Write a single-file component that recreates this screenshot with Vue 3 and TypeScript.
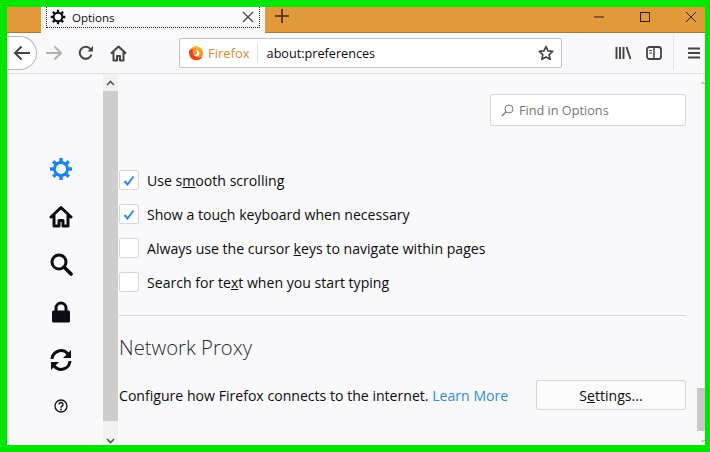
<template>
  <div class="frame">
    <div class="tabbar">
      <div class="tab">
        <div class="tab-inner">
          <svg class="tab-gear" width="16" height="16" viewBox="0 0 24 24"><use href="#gear" /></svg>
          <span class="tab-title">Options</span>
          <svg class="tab-close" width="12" height="12" viewBox="0 0 12 12"><path d="M1 1l10 10M11 1L1 11" stroke="#444" stroke-width="1.4" fill="none" /></svg>
        </div>
      </div>
      <svg class="new-tab" width="14" height="14" viewBox="0 0 14 14"><path d="M7 0v14M0 7h14" stroke="#3a2a12" stroke-width="1.6" /></svg>
      <div class="win-controls">
        <svg width="12" height="12" viewBox="0 0 12 12"><path d="M1 6h10" stroke="#222" stroke-width="1" /></svg>
        <svg width="12" height="12" viewBox="0 0 12 12"><rect x="1.5" y="1.5" width="9" height="9" fill="none" stroke="#222" /></svg>
        <svg width="12" height="12" viewBox="0 0 12 12"><path d="M1 1l10 10M11 1L1 11" stroke="#222" stroke-width="1" fill="none" /></svg>
      </div>
    </div>

    <div class="toolbar">
      <button class="back">
        <svg width="17" height="16" viewBox="0 0 17 16"><path d="M17 8H2M8.500 1.500L2 8l6.500 6.500" stroke="#444" stroke-width="2" fill="none" /></svg>
      </button>
      <svg class="nav-icon" width="17" height="16" viewBox="0 0 17 16"><path d="M0 8h15M8.500 1.500L15 8l-6.500 6.500" stroke="#b0b0b0" stroke-width="2" fill="none" /></svg>
      <svg class="nav-icon" width="16" height="16" viewBox="0 0 16 16"><path d="M13.500 9.500A6 6 0 1 1 11.600 3.200L14 5" stroke="#444" stroke-width="2" fill="none" /><path d="M15 1v5.500H9.500z" fill="#444" /></svg>
      <svg class="nav-icon" width="17" height="17" viewBox="0 0 17 17"><path d="M1 8.500L8.500 1.500 16 8.500M3.500 7v8.500h3.500v-4.500h3v4.500h3.500V7" stroke="#444" stroke-width="2" fill="none" stroke-linejoin="round" /></svg>
      <div class="urlbar">
        <svg class="fx-logo" width="16" height="16" viewBox="0 0 16 16">
          <circle cx="8" cy="8.500" r="7" fill="#f59a23" />
          <path d="M1 6c0 5 3 9 7.500 9 3 0 5-1.500 6-3.500-2 1.500-5 1.500-7 0C5 10 4 7 5 4.500 3 4 1.500 5 1 6z" fill="#e8402a" />
          <path d="M8 5a3.500 3.500 0 0 1 3.300 4.500A3.500 3.500 0 0 1 5.500 10c1.500.5 3 0 3.500-1.500.400-1.300 0-2.500-1-3.500z" fill="#fff" />
          <path d="M7 .500c3 .500 6 2 7.500 5.500C13 4 10.500 3 8 3.500z" fill="#fbc02d" />
        </svg>
        <span class="fx-name">Firefox</span>
        <span class="url-sep"></span>
        <span class="url">about:preferences</span>
        <svg class="star" width="16" height="16" viewBox="0 0 16 16"><path d="M8 1.500l2 4.300 4.700.6-3.500 3.200.9 4.700L8 11.900l-4.100 2.400.9-4.700L1.300 6.400 6 5.800z" stroke="#444" stroke-width="1.700" fill="none" stroke-linejoin="round" /></svg>
      </div>
      <div class="tools">
        <svg width="17" height="14" viewBox="0 0 17 14"><path d="M1.500 1v12M5 1v12M8.500 1v12M11.500 1l4 12" stroke="#444" stroke-width="1.900" fill="none" /></svg>
        <svg class="sidebar-btn" width="16" height="14" viewBox="0 0 16 14"><rect x="1" y="1" width="14" height="12" rx="2.500" fill="none" stroke="#444" stroke-width="1.800" /><path d="M8 1v12" stroke="#444" stroke-width="1.500" /><path d="M3 4.500h3M3 7h3" stroke="#444" /></svg>
        <span class="tool-sep"></span>
        <svg width="12" height="12" viewBox="0 0 12 12"><path d="M0 1.500h12M0 6h12M0 10.500h12" stroke="#444" stroke-width="1.800" /></svg>
      </div>
    </div>

    <div class="page">
      <nav class="sidebar">
        <svg class="side-icon active" width="24" height="24" viewBox="0 0 24 24"><use href="#gear" /></svg>
        <svg class="side-icon home" width="24" height="24" viewBox="0 0 24 24"><path d="M2 12L12 2.500 22 12M5 10.500V21h5v-5.500h4V21h5V10.500" stroke="#0c0c14" stroke-width="3" fill="none" stroke-linejoin="round" stroke-linecap="round" /></svg>
        <svg class="side-icon" width="24" height="24" viewBox="0 0 24 24"><circle cx="10" cy="10" r="7" stroke="#0c0c14" stroke-width="3" fill="none" /><path d="M15 15l7 7" stroke="#0c0c14" stroke-width="3.600" stroke-linecap="round" /></svg>
        <svg class="side-icon" width="24" height="24" viewBox="0 0 24 24"><path d="M7 11V8a5 5 0 0 1 10 0v3" stroke="#0c0c14" stroke-width="3" fill="none" /><rect x="3" y="10.500" width="18" height="12" rx="1.500" fill="#0c0c14" /></svg>
        <svg class="side-icon" width="24" height="24" viewBox="0 0 24 24"><path d="M3 11a9 9 0 0 1 15.500-5.500L20 7" stroke="#0c0c14" stroke-width="3" fill="none" /><path d="M22 2v8h-8z" fill="#0c0c14" /><path d="M21 13a9 9 0 0 1-15.500 5.500L4 17" stroke="#0c0c14" stroke-width="3" fill="none" /><path d="M2 22v-8h8z" fill="#0c0c14" /></svg>
        <svg class="side-icon help" width="14" height="14" viewBox="0 0 14 14"><circle cx="7" cy="7" r="6" stroke="#0c0c14" stroke-width="1.300" fill="none" /><path d="M5 5.500a2 2 0 1 1 3 1.700c-.7.400-1 .800-1 1.500" stroke="#0c0c14" stroke-width="1.400" fill="none" /><circle cx="7" cy="10.500" r=".9" fill="#0c0c14" /></svg>
      </nav>

      <div class="scrollbar side-scroll">
        <div class="end top">
          <svg width="9" height="6" viewBox="0 0 9 6"><path d="M1 5l3.500-3.500L8 5" stroke="#555" stroke-width="1.600" fill="none" /></svg>
        </div>
        <div class="thumb"></div>
        <div class="end bottom">
          <svg width="9" height="6" viewBox="0 0 9 6"><path d="M1 1l3.500 3.500L8 1" stroke="#555" stroke-width="1.600" fill="none" /></svg>
        </div>
      </div>

      <main class="content">
        <div class="search-row">
          <div class="search">
            <svg width="13" height="13" viewBox="0 0 13 13"><circle cx="8" cy="5" r="4" stroke="#777" fill="none" /><path d="M5 8l-4 4" stroke="#777" stroke-width="1.200" /></svg>
            <span>Find in Options</span>
          </div>
        </div>

        <ul class="options">
          <li v-for="opt in options" :key="opt.before" class="option">
            <span class="check">
              <svg v-if="opt.checked" width="12" height="11" viewBox="0 0 12 11"><path d="M1.500 6l3 3.500L10.500 1.500" stroke="#2a8ae8" stroke-width="2" fill="none" /></svg>
            </span>
            <span>{{ opt.before }}<u>{{ opt.key }}</u>{{ opt.after }}</span>
          </li>
        </ul>

        <hr class="rule" />
        <h2 class="heading">Network Proxy</h2>
        <div class="proxy-row">
          <span>Configure how Firefox connects to the internet. <a class="link">Learn More</a></span>
          <button class="settings">S<u>e</u>ttings...</button>
        </div>
      </main>

      <div class="scrollbar page-scroll">
        <div class="end top">
          <svg width="9" height="6" viewBox="0 0 9 6"><path d="M1 5l3.500-3.500L8 5" stroke="#555" stroke-width="1.600" fill="none" /></svg>
        </div>
        <div class="thumb"></div>
        <div class="end bottom">
          <svg width="9" height="6" viewBox="0 0 9 6"><path d="M1 1l3.500 3.500L8 1" stroke="#555" stroke-width="1.600" fill="none" /></svg>
        </div>
      </div>
    </div>

    <svg width="0" height="0" class="defs">
      <defs>
        <symbol id="gear" viewBox="0 0 24 24">
          <g fill="none" stroke="currentColor">
            <circle cx="12" cy="12" r="6.500" stroke-width="3" />
            <path d="M12 1v22M1 12h22M4.200 4.200l15.600 15.600M19.800 4.200L4.200 19.800" stroke-width="3.400" stroke-dasharray="5 12 5" />
          </g>
        </symbol>
      </defs>
    </svg>
  </div>
</template>

<script setup lang="ts">
interface Option {
  before: string
  key: string
  after: string
  checked: boolean
}

const options: Option[] = [
  { before: 'Use s', key: 'm', after: 'ooth scrolling', checked: true },
  { before: 'Show a tou', key: 'c', after: 'h keyboard when necessary', checked: true },
  { before: 'Always use the cursor ', key: 'k', after: 'eys to navigate within pages', checked: false },
  { before: 'Search for te', key: 'x', after: 't when you start typing', checked: false },
]
</script>

<style>
html, body {
  margin: 0;
  background: #00e600;
}
</style>

<style scoped>
.frame {
  width: 710px;
  height: 452px;
  box-sizing: border-box;
  border: solid #00e600;
  border-width: 7px 5px 7px 7px;
  display: flex;
  flex-direction: column;
  overflow: hidden;
  font-family: "Open Sans", "Noto Sans", sans-serif;
  font-size: 14.1px;
  color: #0c0c0d;
}

.tabbar {
  height: 26px;
  flex: none;
  box-sizing: border-box;
  background: #e09a3a;
  border-bottom: 1px solid #a87a3c;
  display: flex;
  align-items: flex-start;
  padding-left: 34px;
}

.tab {
  width: 224px;
  height: 26px;
  background: #fafafc;
  box-sizing: border-box;
  padding: 0 5px;
  flex: none;
}

.tab-inner {
  height: 21px;
  box-sizing: border-box;
  border: 1px dotted #222;
  border-top: none;
  display: flex;
  align-items: center;
  padding: 0 5px 0 3px;
  color: #0c0c0d;
}

.tab-gear {
  color: #0c0c14;
  flex: none;
}

.tab-title {
  margin-left: 6px;
  font-size: 11.5px;
  flex: 1;
}

.new-tab {
  margin: 2px 0 0 10px;
}

.win-controls {
  margin-left: auto;
  display: flex;
  gap: 34px;
  padding: 4px 8px 0 0;
}

.toolbar {
  height: 41px;
  flex: none;
  box-sizing: border-box;
  background: #f9f9fb;
  border-bottom: 1px solid #e1e1e3;
  display: flex;
  align-items: center;
}

.back {
  width: 31px;
  height: 34px;
  margin-left: -1px;
  box-sizing: border-box;
  border: 1px solid #b8b8b8;
  border-left: none;
  border-radius: 0 17px 17px 0;
  background: #fff;
  padding: 0 0 0 7px;
  display: flex;
  align-items: center;
}

.nav-icon {
  flex: none;
  margin-left: 9px;
}

.nav-icon + .nav-icon {
  margin-left: 15px;
}

.nav-icon + .nav-icon + .nav-icon {
  margin-left: 16px;
}

.urlbar {
  width: 383px;
  height: 30px;
  margin-left: 52px;
  box-sizing: border-box;
  border: 1px solid #c4c4c6;
  border-radius: 2px;
  background: #fff;
  display: flex;
  align-items: center;
  padding: 0 7px 0 8px;
  flex: none;
}

.fx-name {
  margin-left: 4px;
  color: #d98a3a;
  font-size: 13px;
}

.url-sep {
  width: 1px;
  height: 20px;
  background: #e0e0e2;
  margin: 0 9px 0 7px;
}

.url {
  flex: 1;
  font-size: 12.65px;
}

.tools {
  flex: 1;
  display: flex;
  align-items: center;
  padding-left: 53px;
  gap: 14px;
}

.tool-sep {
  width: 1px;
  height: 34px;
  background: #e1e1e3;
  margin-left: -3px;
}

.page {
  flex: 1;
  min-height: 0;
  display: flex;
  background: #f9f9fb;
}

.sidebar {
  width: 96px;
  flex: none;
  box-sizing: border-box;
  display: flex;
  flex-direction: column;
  align-items: center;
  padding: 83px 0 0 12px;
  gap: 24px;
}

.side-icon {
  flex: none;
  color: #0c0c14;
}

.side-icon.active {
  color: #1a86f5;
}

.home {
  margin-bottom: -1px;
}

.help {
  margin: 3px 0 0;
}

.scrollbar {
  flex: none;
  background: #f1f1f1;
  display: flex;
  flex-direction: column;
}

.end {
  flex: none;
  display: flex;
  justify-content: center;
}

.side-scroll {
  width: 15px;
}

.side-scroll .top {
  height: 17px;
  align-items: center;
}

.side-scroll .bottom {
  height: 24px;
  align-items: flex-end;
  padding-bottom: 1px;
  box-sizing: border-box;
}

.side-scroll .thumb {
  flex: 1;
  background: #cdcdcd;
}

.page-scroll {
  width: 8px;
  background: #f9f9fb;
  overflow: hidden;
}

.page-scroll .end {
  justify-content: flex-start;
  padding-left: 4px;
}

.page-scroll .top {
  height: 17px;
  align-items: center;
}

.page-scroll .bottom {
  height: 14px;
  box-sizing: border-box;
  align-items: flex-end;
  padding-bottom: 1px;
}

.page-scroll .thumb {
  height: 43px;
  margin-top: auto;
  background: #c8c8c8;
}

.content {
  flex: 1;
  min-width: 0;
  padding: 0 11px 0 1px;
}

.search-row {
  display: flex;
  justify-content: flex-end;
  padding-top: 20px;
}

.search {
  width: 196px;
  height: 32px;
  box-sizing: border-box;
  border: 1px solid #d7d7db;
  border-radius: 2px;
  background: #fff;
  display: flex;
  align-items: center;
  padding-left: 10px;
  gap: 5px;
  color: #75757a;
  font-size: 12.7px;
}

.options {
  list-style: none;
  margin: 0;
  padding: 0;
  margin-top: 37px;
}

.option {
  height: 34px;
  display: flex;
  align-items: center;
  gap: 8px;
  white-space: nowrap;
}

.check {
  width: 20px;
  height: 20px;
  box-sizing: border-box;
  border: 1px solid #d7d7db;
  border-radius: 2px;
  background: #fff;
  display: flex;
  align-items: center;
  justify-content: center;
  flex: none;
}

.rule {
  border: none;
  border-top: 1px solid #d7d7db;
  margin: 16px 0 0;
}

.heading {
  margin: 16px 0 0;
  font-size: 20.3px;
  font-weight: 300;
  line-height: 30px;
  color: #2a2a2e;
}

.proxy-row {
  display: flex;
  align-items: center;
  justify-content: space-between;
  margin-top: 18px;
  white-space: nowrap;
}

.link {
  color: #2f8ae0;
}

.settings {
  width: 150px;
  height: 30px;
  box-sizing: border-box;
  border: 1px solid #d7d7db;
  border-radius: 2px;
  background: #fbfbfc;
  font: inherit;
  color: #0c0c0d;
  padding: 0;
}

.defs {
  position: absolute;
}
</style>
